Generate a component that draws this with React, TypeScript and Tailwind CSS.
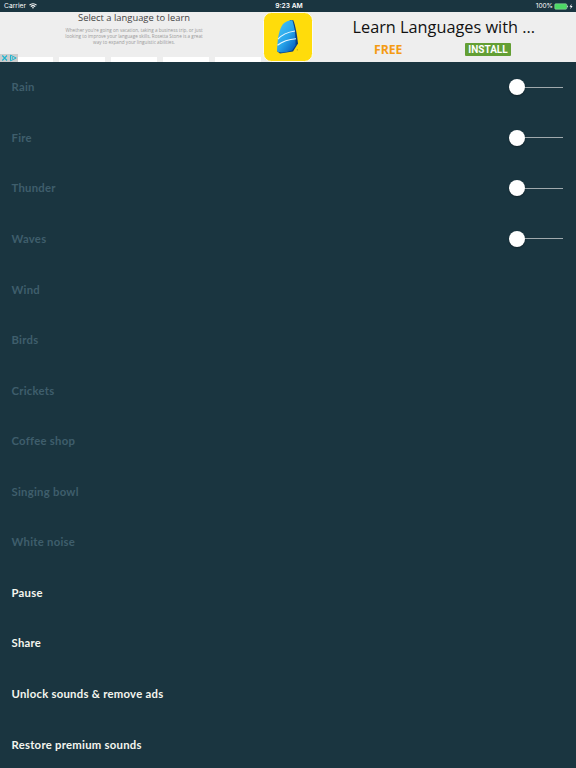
import React, { useState } from 'react';

interface Sound {
  name: string;
  locked: boolean;
}

const sounds: Sound[] = [
  { name: 'Rain', locked: false },
  { name: 'Fire', locked: false },
  { name: 'Thunder', locked: false },
  { name: 'Waves', locked: false },
  { name: 'Wind', locked: true },
  { name: 'Birds', locked: true },
  { name: 'Crickets', locked: true },
  { name: 'Coffee shop', locked: true },
  { name: 'Singing bowl', locked: true },
  { name: 'White noise', locked: true },
];

const actions = ['Pause', 'Share', 'Unlock sounds & remove ads', 'Restore premium sounds'];

const StatusBar: React.FC = () => (
  <header className="grid h-3 shrink-0 grid-cols-3 items-center pl-[4px] pr-[3px] font-['Inter',sans-serif] text-[6.7px] leading-3 text-white">
    <div className="flex items-center gap-[3px]">
      <span>Carrier</span>
      <svg width="8" height="6" viewBox="0 0 8 6" fill="none" stroke="white">
        <path d="M0.5 2.1C2.5 0.3 5.5 0.3 7.5 2.1" strokeWidth="1.2" />
        <path d="M1.8 3.6C3 2.5 5 2.5 6.2 3.6" strokeWidth="1.1" />
        <path d="M4 5.8L2.9 4.6C3.5 4.1 4.5 4.1 5.1 4.6Z" fill="white" stroke="none" />
      </svg>
    </div>
    <span className="pl-[1px] text-center font-semibold">9:23 AM</span>
    <div className="flex items-center justify-end gap-[1px]">
      <span className="text-[6.5px]">100%</span>
      <svg width="19" height="7" viewBox="0 0 19 7">
        <rect x="0.75" y="0.75" width="12" height="5.5" rx="1" fill="#4cd964" stroke="#a5dfb0" strokeWidth="0.5" />
        <path d="M13.3 2.5C14.3 2.7 14.3 4.3 13.3 4.5Z" fill="white" />
        <path d="M17.7 0.8L15.5 3.8H16.9L16.3 6.2L18.6 3.1H17.1Z" fill="white" />
      </svg>
    </div>
  </header>
);

const AppIcon: React.FC = () => (
  <svg className="shrink-0" width="50" height="50" viewBox="0 0 50 50">
    <defs>
      <linearGradient id="stone" x1="0" y1="0" x2="0.8" y2="1">
        <stop offset="0" stopColor="#4cc6f6" />
        <stop offset="0.6" stopColor="#27a4ea" />
        <stop offset="1" stopColor="#0a62c0" />
      </linearGradient>
    </defs>
    <rect x="0.5" y="0.5" width="49" height="49" rx="8" fill="#ffdc0b" stroke="#fafaf4" />
    <path d="M27 8L30.3 8.2C32.3 13 34 22 35 31.5L30 39.5L17 41.6L14.3 39.5Z" fill="#0b3f80" />
    <path d="M29.3 8.2C26.5 8 22.5 9.3 20 12C16.5 17 14.6 24 14 38.5C14.3 41.3 22 41 29 38.5L32.5 33.5C32.8 25 31.8 15 29.3 8.2Z" fill="url(#stone)" />
    <path d="M15 27.2C19 22.5 25 20 32 19" fill="none" stroke="#e8f7ff" strokeWidth="1.1" />
    <path d="M14.5 33.2C19.5 29.3 26 27.2 33 26.7" fill="none" stroke="#e8f7ff" strokeWidth="1.1" />
    <circle cx="34.3" cy="37.8" r="0.6" fill="#a68a1c" />
  </svg>
);

const AdBanner: React.FC = () => (
  <section className="flex h-[50px] shrink-0 overflow-hidden bg-[#eeeeee]">
    <div className="relative flex w-[263px] shrink-0 flex-col pr-[1px]">
      <div className="flex flex-col items-center pl-[6px] font-['Open_Sans',sans-serif]">
        <h2 className="whitespace-nowrap text-[9.4px] font-medium leading-3 text-[#444444]">
          Select a language to learn
        </h2>
        <p className="mt-[3px] whitespace-nowrap text-center text-[4.65px] leading-[6px] text-[#999999]">
          Whether you're going on vacation, taking a business trip, or just
          <br />
          looking to improve your language skills, Rosetta Stone is a great
          <br />
          way to expand your linguistic abilities.
        </p>
      </div>
      <div className="mt-auto flex h-[5px] gap-[6px] pl-[7px]">
        {[0, 1, 2, 3, 4].map((card) => (
          <div key={card} className="h-full w-[46px] bg-white" />
        ))}
      </div>
      <div className="absolute bottom-0 left-0 flex h-2 w-[18px] items-center justify-around bg-[#cccccc]">
        <svg width="18" height="8" viewBox="0 0 18 8" fill="none" stroke="#1bb5d0">
          <path d="M2.3 1.5L7 6.5M7 1.5L2.3 6.5" strokeWidth="1.1" />
          <path d="M10.5 1.2V6.8L16.2 4Z" strokeWidth="1" />
          <path d="M12.3 3V5" strokeWidth="0.9" />
        </svg>
      </div>
    </div>
    <AppIcon />
    <div className="flex flex-1 flex-col">
      <h1 className="mt-[3px] whitespace-nowrap pl-[39.5px] font-['Open_Sans',sans-serif] text-[16.3px] leading-6 text-[#111111]">
        Learn Languages with ...
      </h1>
      <div className="mt-[3px] flex items-center pl-[61px]">
        <span className="w-[91px] pt-[1px] font-['Open_Sans',sans-serif] text-[12.2px] font-bold leading-[13px] text-[#f49b13]">
          FREE
        </span>
        <button
          type="button"
          className="h-[13px] w-[46px] rounded-[1px] bg-[#639f34] font-['Roboto',sans-serif] text-[10px] font-bold leading-[13px] text-white"
        >
          INSTALL
        </button>
      </div>
    </div>
  </section>
);

const VolumeSlider: React.FC<{ label: string }> = ({ label }) => {
  const [volume, setVolume] = useState(0);

  return (
    <div className="relative flex h-4 w-[54px] items-center">
      <div className="h-[1px] w-full bg-[#a0a9ad]" />
      <div
        className="absolute h-4 w-4 rounded-full bg-white shadow-[0_1px_2px_rgba(0,0,0,0.35)]"
        style={{ left: (volume / 100) * 38 }}
      />
      <input
        type="range"
        aria-label={label}
        value={volume}
        onChange={(e) => setVolume(Number(e.target.value))}
        className="absolute inset-0 w-full cursor-pointer opacity-0"
      />
    </div>
  );
};

const App: React.FC = () => {
  return (
    <div className="flex h-screen flex-col overflow-hidden bg-[#1a3540]">
      <StatusBar />
      <AdBanner />
      <main className="font-['Lato',sans-serif] text-[11.3px] font-bold tracking-[0.27px]">
        {sounds.map((sound) => (
          <div key={sound.name} className="flex h-[50.56px] items-center justify-between pl-[11.5px] pr-[13px]">
            <span className="pt-[1.2px] text-[#3f5e6c]">{sound.name}</span>
            {!sound.locked && <VolumeSlider label={sound.name} />}
          </div>
        ))}
        {actions.map((action) => (
          <button
            key={action}
            type="button"
            className="flex h-[50.56px] w-full items-center pl-[11.5px] pt-[1.2px] text-left text-[#f4f5ef]"
          >
            {action}
          </button>
        ))}
      </main>
    </div>
  );
};

export default App;
